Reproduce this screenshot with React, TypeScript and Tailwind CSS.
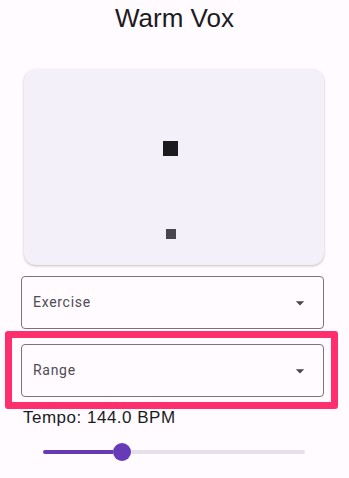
import React from "react";

function Field({ label }: { label: string }) {
  return (
    <div className="w-[303px] h-[53px] border border-[#79747e] rounded-[4px] flex items-center justify-between pl-[11px] pr-[13px]">
      <span className="text-[14px] font-normal tracking-[0.7px] text-[#4f4b55] font-['Roboto',sans-serif]">{label}</span>
      <svg width="20" height="20" viewBox="0 0 24 24" fill="#49454f">
        <path d="M7 10l5 5 5-5z" />
      </svg>
    </div>
  );
}

export default function App() {
  return (
    <div className="w-[349px] h-[478px] bg-[#fffbfe] flex flex-col overflow-hidden font-['Liberation_Sans',Arial,sans-serif] text-[#1c1b1f]">
      <div className="mt-[3px] h-[30px] leading-[30px] text-[26px] text-center">Warm Vox</div>
      <div className="mt-[36px] ml-[24px] w-[300px] h-[196px] rounded-[12px] bg-[#f4f0f9] shadow-[0_1px_3px_rgba(0,0,0,0.18),0_1px_2px_rgba(0,0,0,0.08)] flex flex-col">
        <div className="mt-[72px] ml-[139px] w-[15px] h-[15px] bg-[#1c1b1f]" />
        <div className="mt-[73px] ml-[142px] w-[10px] h-[10px] bg-[#49454f]" />
      </div>
      <div className="mt-[11px] ml-[21px]">
        <Field label="Exercise" />
      </div>
      <div className="mt-[2px] ml-[5px] w-[333px] h-[78px] border-[7px] border-[#ff2e6c] rounded-[3px] pl-[9px] pt-[6px]">
        <Field label="Range" />
      </div>
      <div className="ml-[23px] h-[17px] leading-[17px] text-[17px] tracking-[0.5px]">Tempo: 144.0 BPM</div>
      <div className="mt-[17px] ml-[43px] w-[262px] h-[18px] flex items-center">
        <div className="w-[70px] h-[4px] rounded-l-full bg-[#673ab7]" />
        <div className="w-[18px] h-[18px] rounded-full bg-[#673ab7] shrink-0" />
        <div className="flex-1 h-[4px] rounded-r-full bg-[#e7e0ec]" />
      </div>
    </div>
  );
}
